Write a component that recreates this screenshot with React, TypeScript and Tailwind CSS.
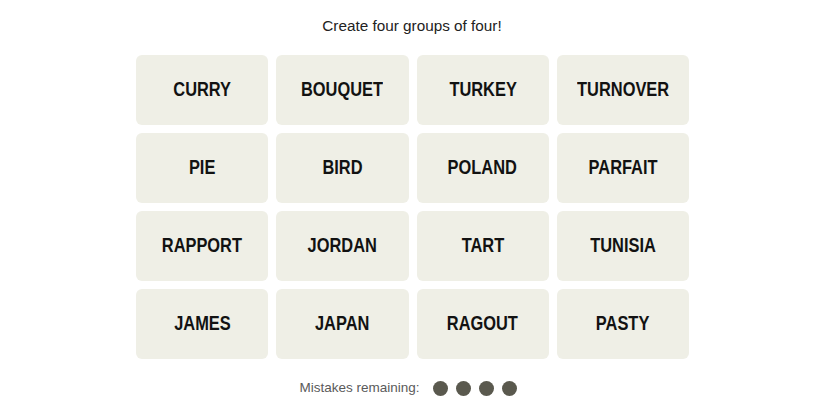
const words = [
  'CURRY', 'BOUQUET', 'TURKEY', 'TURNOVER',
  'PIE', 'BIRD', 'POLAND', 'PARFAIT',
  'RAPPORT', 'JORDAN', 'TART', 'TUNISIA',
  'JAMES', 'JAPAN', 'RAGOUT', 'PASTY',
];

export default function App() {
  return (
    <div className="min-h-[413px] w-full bg-white flex flex-col items-center font-['Liberation_Sans',sans-serif]">
      <p className="mt-[16px] h-[20px] leading-[20px] text-[15.3px] text-[#222] pr-[1px]">Create four groups of four!</p>
      <div className="mt-[19px] grid grid-cols-[repeat(4,132.25px)] auto-rows-[70px] gap-[8px]">
        {words.map((w) => (
          <button
            key={w}
            className="rounded-[6px] bg-[#efefe6] flex items-center justify-center pb-[2px] font-bold text-[20px] text-[#121212]"
          >
            <span className="inline-block scale-x-[0.82] whitespace-nowrap">{w}</span>
          </button>
        ))}
      </div>
      <div className="mt-[19px] mr-[9px] flex items-center">
        <span className="text-[13.5px] text-[#5a5a5a] mr-[13px]">Mistakes remaining:</span>
        <div className="flex gap-[8px]">
          {[0, 1, 2, 3].map((i) => (
            <span key={i} className="w-[15px] h-[15px] rounded-full bg-[#5a594e]" />
          ))}
        </div>
      </div>
    </div>
  );
}
